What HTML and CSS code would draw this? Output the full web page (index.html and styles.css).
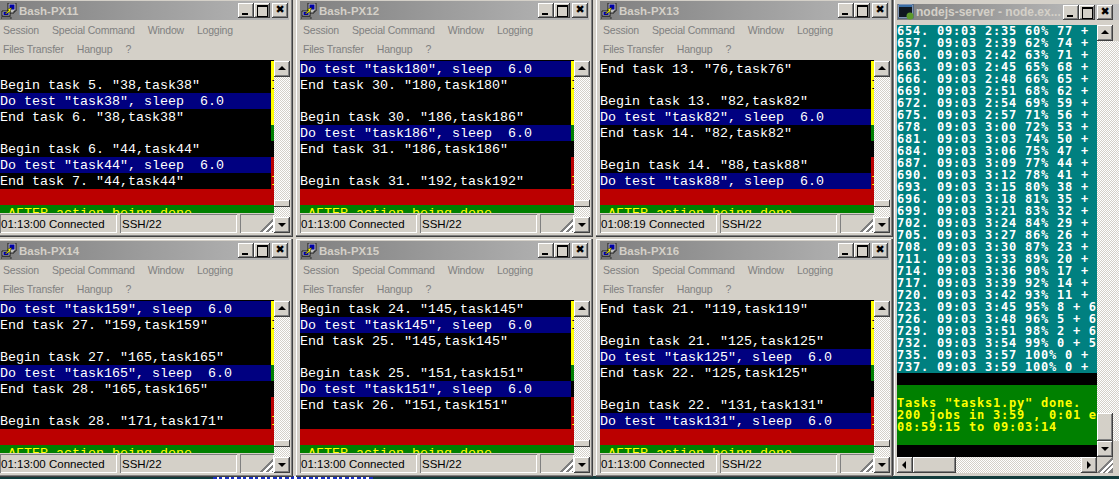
FILE: index.html
```html
<!DOCTYPE html>
<html lang="en">
<head>
<meta charset="utf-8">
<title>Bash-PX windows</title>
<link rel="stylesheet" href="styles.css">
</head>
<body>
<svg class="defs" width="0" height="0" aria-hidden="true">
  <symbol id="putty" viewBox="0 0 16 16">
    <path d="M7 0h8v8h-2v2H8V8H7z" fill="#c0c0c0" stroke="#000" stroke-width=".8"/>
    <rect x="8.5" y="1.5" width="5" height="5" fill="#0000a8"/>
    <path d="M1 8h8v5H1z" fill="#c0c0c0" stroke="#000" stroke-width=".8"/>
    <rect x="2.5" y="9" width="5" height="3" fill="#0000a8"/>
    <path d="M0 14h10v2H0z" fill="#a0a0a0" stroke="#000" stroke-width=".6"/>
    <path d="M4 10.5 7.5 8l-.5-2 4-1.500-2 3 1 .5-5 3z" fill="#ffff00" stroke="#000" stroke-width=".4"/>
  </symbol>
  <symbol id="cmd" viewBox="0 0 16 16">
    <rect x="0" y="0" width="15" height="14" fill="#d8d8e8" stroke="#29507f"/>
    <rect x="1" y="3" width="13" height="10" fill="#101820"/>
    <rect x="1" y="1" width="13" height="2" fill="#3a6ea5"/>
    <circle cx="12" cy="12" r="3.500" fill="#5c9a2a"/>
  </symbol>
</svg>
<main class="desk">
  <div class="under"><span class="under-text"></span></div>

  <section class="win pos11">
    <header class="title"><svg class="ticon"><use href="#putty"/></svg><span class="tname">Bash-PX11</span><span class="ctl min"></span><span class="ctl max"></span><span class="ctl close">✖</span></header>
    <nav class="menu"><span>Session</span><span>Special Command</span><span>Window</span><span>Logging</span></nav>
    <nav class="menu"><span>Files Transfer</span><span>Hangup</span><span>?</span></nav>
    <div class="body">
      <div class="left">
        <div class="term">
          <div class="row"><span class="cells"></span><span class="edge y"></span></div>
          <div class="row"><span class="cells">Begin task 5. "38,task38"</span><span class="edge y mark">I</span></div>
          <div class="row"><span class="cells b">Do test "task38", sleep  6.0</span><span class="edge y"></span></div>
          <div class="row"><span class="cells">End task 6. "38,task38"</span><span class="edge y"></span></div>
          <div class="row"><span class="cells"></span><span class="edge g"></span></div>
          <div class="row"><span class="cells">Begin task 6. "44,task44"</span><span class="edge"></span></div>
          <div class="row"><span class="cells b">Do test "task44", sleep  6.0</span><span class="edge r"></span></div>
          <div class="row"><span class="cells">End task 7. "44,task44"</span><span class="edge r ymark">I</span></div>
          <div class="band red"></div>
          <div class="band green"> AFTER action being done</div>
        </div>
        <footer class="status"><span class="p1">01:13:00 Connected</span><span class="p2">SSH/22</span><span class="p3"></span></footer>
      </div>
      <aside class="vbar"><span class="btn up"></span><span class="track"><span class="thumb"></span></span><span class="btn down"></span></aside>
    </div>
  </section>

  <section class="win pos12">
    <header class="title"><svg class="ticon"><use href="#putty"/></svg><span class="tname">Bash-PX12</span><span class="ctl min"></span><span class="ctl max"></span><span class="ctl close">✖</span></header>
    <nav class="menu"><span>Session</span><span>Special Command</span><span>Window</span><span>Logging</span></nav>
    <nav class="menu"><span>Files Transfer</span><span>Hangup</span><span>?</span></nav>
    <div class="body">
      <div class="left">
        <div class="term">
          <div class="row"><span class="cells b">Do test "task180", sleep  6.0</span><span class="edge y"></span></div>
          <div class="row"><span class="cells">End task 30. "180,task180"</span><span class="edge y mark">I</span></div>
          <div class="row"><span class="cells"></span><span class="edge y"></span></div>
          <div class="row"><span class="cells">Begin task 30. "186,task186"</span><span class="edge y"></span></div>
          <div class="row"><span class="cells b">Do test "task186", sleep  6.0</span><span class="edge g"></span></div>
          <div class="row"><span class="cells">End task 31. "186,task186"</span><span class="edge"></span></div>
          <div class="row"><span class="cells"></span><span class="edge r"></span></div>
          <div class="row"><span class="cells">Begin task 31. "192,task192"</span><span class="edge r ymark">I</span></div>
          <div class="band red"></div>
          <div class="band green"> AFTER action being done</div>
        </div>
        <footer class="status"><span class="p1">01:13:00 Connected</span><span class="p2">SSH/22</span><span class="p3"></span></footer>
      </div>
      <aside class="vbar"><span class="btn up"></span><span class="track"><span class="thumb"></span></span><span class="btn down"></span></aside>
    </div>
  </section>

  <section class="win pos13">
    <header class="title"><svg class="ticon"><use href="#putty"/></svg><span class="tname">Bash-PX13</span><span class="ctl min"></span><span class="ctl max"></span><span class="ctl close">✖</span></header>
    <nav class="menu"><span>Session</span><span>Special Command</span><span>Window</span><span>Logging</span></nav>
    <nav class="menu"><span>Files Transfer</span><span>Hangup</span><span>?</span></nav>
    <div class="body">
      <div class="left">
        <div class="term">
          <div class="row"><span class="cells">End task 13. "76,task76"</span><span class="edge y"></span></div>
          <div class="row"><span class="cells"></span><span class="edge y mark">I</span></div>
          <div class="row"><span class="cells">Begin task 13. "82,task82"</span><span class="edge y"></span></div>
          <div class="row"><span class="cells b">Do test "task82", sleep  6.0</span><span class="edge y"></span></div>
          <div class="row"><span class="cells">End task 14. "82,task82"</span><span class="edge g"></span></div>
          <div class="row"><span class="cells"></span><span class="edge"></span></div>
          <div class="row"><span class="cells">Begin task 14. "88,task88"</span><span class="edge r"></span></div>
          <div class="row"><span class="cells b">Do test "task88", sleep  6.0</span><span class="edge r ymark">I</span></div>
          <div class="band red"></div>
          <div class="band green"> AFTER action being done</div>
        </div>
        <footer class="status"><span class="p1">01:08:19 Connected</span><span class="p2">SSH/22</span><span class="p3"></span></footer>
      </div>
      <aside class="vbar"><span class="btn up"></span><span class="track"><span class="thumb"></span></span><span class="btn down"></span></aside>
    </div>
  </section>

  <section class="win pos14">
    <header class="title"><svg class="ticon"><use href="#putty"/></svg><span class="tname">Bash-PX14</span><span class="ctl min"></span><span class="ctl max"></span><span class="ctl close">✖</span></header>
    <nav class="menu"><span>Session</span><span>Special Command</span><span>Window</span><span>Logging</span></nav>
    <nav class="menu"><span>Files Transfer</span><span>Hangup</span><span>?</span></nav>
    <div class="body">
      <div class="left">
        <div class="term">
          <div class="row"><span class="cells b">Do test "task159", sleep  6.0</span><span class="edge y"></span></div>
          <div class="row"><span class="cells">End task 27. "159,task159"</span><span class="edge y mark">I</span></div>
          <div class="row"><span class="cells"></span><span class="edge y"></span></div>
          <div class="row"><span class="cells">Begin task 27. "165,task165"</span><span class="edge y"></span></div>
          <div class="row"><span class="cells b">Do test "task165", sleep  6.0</span><span class="edge g"></span></div>
          <div class="row"><span class="cells">End task 28. "165,task165"</span><span class="edge"></span></div>
          <div class="row"><span class="cells"></span><span class="edge r"></span></div>
          <div class="row"><span class="cells">Begin task 28. "171,task171"</span><span class="edge r ymark">I</span></div>
          <div class="band red"></div>
          <div class="band green"> AFTER action being done</div>
        </div>
        <footer class="status"><span class="p1">01:13:00 Connected</span><span class="p2">SSH/22</span><span class="p3"></span></footer>
      </div>
      <aside class="vbar"><span class="btn up"></span><span class="track"><span class="thumb"></span></span><span class="btn down"></span></aside>
    </div>
  </section>

  <section class="win pos15">
    <header class="title"><svg class="ticon"><use href="#putty"/></svg><span class="tname">Bash-PX15</span><span class="ctl min"></span><span class="ctl max"></span><span class="ctl close">✖</span></header>
    <nav class="menu"><span>Session</span><span>Special Command</span><span>Window</span><span>Logging</span></nav>
    <nav class="menu"><span>Files Transfer</span><span>Hangup</span><span>?</span></nav>
    <div class="body">
      <div class="left">
        <div class="term">
          <div class="row"><span class="cells">Begin task 24. "145,task145"</span><span class="edge y"></span></div>
          <div class="row"><span class="cells b">Do test "task145", sleep  6.0</span><span class="edge y mark">I</span></div>
          <div class="row"><span class="cells">End task 25. "145,task145"</span><span class="edge y"></span></div>
          <div class="row"><span class="cells"></span><span class="edge y"></span></div>
          <div class="row"><span class="cells">Begin task 25. "151,task151"</span><span class="edge g"></span></div>
          <div class="row"><span class="cells b">Do test "task151", sleep  6.0</span><span class="edge"></span></div>
          <div class="row"><span class="cells">End task 26. "151,task151"</span><span class="edge r"></span></div>
          <div class="row"><span class="cells"></span><span class="edge r ymark">I</span></div>
          <div class="band red"></div>
          <div class="band green"> AFTER action being done</div>
        </div>
        <footer class="status"><span class="p1">01:13:00 Connected</span><span class="p2">SSH/22</span><span class="p3"></span></footer>
      </div>
      <aside class="vbar"><span class="btn up"></span><span class="track"><span class="thumb"></span></span><span class="btn down"></span></aside>
    </div>
  </section>

  <section class="win pos16">
    <header class="title"><svg class="ticon"><use href="#putty"/></svg><span class="tname">Bash-PX16</span><span class="ctl min"></span><span class="ctl max"></span><span class="ctl close">✖</span></header>
    <nav class="menu"><span>Session</span><span>Special Command</span><span>Window</span><span>Logging</span></nav>
    <nav class="menu"><span>Files Transfer</span><span>Hangup</span><span>?</span></nav>
    <div class="body">
      <div class="left">
        <div class="term">
          <div class="row"><span class="cells">End task 21. "119,task119"</span><span class="edge y"></span></div>
          <div class="row"><span class="cells"></span><span class="edge y mark">I</span></div>
          <div class="row"><span class="cells">Begin task 21. "125,task125"</span><span class="edge y"></span></div>
          <div class="row"><span class="cells b">Do test "task125", sleep  6.0</span><span class="edge y"></span></div>
          <div class="row"><span class="cells">End task 22. "125,task125"</span><span class="edge g"></span></div>
          <div class="row"><span class="cells"></span><span class="edge"></span></div>
          <div class="row"><span class="cells">Begin task 22. "131,task131"</span><span class="edge r"></span></div>
          <div class="row"><span class="cells b">Do test "task131", sleep  6.0</span><span class="edge r ymark">I</span></div>
          <div class="band red"></div>
          <div class="band green"> AFTER action being done</div>
        </div>
        <footer class="status"><span class="p1">01:13:00 Connected</span><span class="p2">SSH/22</span><span class="p3"></span></footer>
      </div>
      <aside class="vbar"><span class="btn up"></span><span class="track"><span class="thumb"></span></span><span class="btn down"></span></aside>
    </div>
  </section>

  <section class="node">
    <header class="ntitle"><svg class="ticon"><use href="#cmd"/></svg><span class="nname">nodejs-server - node.ex...</span><span class="ctl min"></span><span class="ctl max"></span><span class="ctl close">✖</span></header>
    <div class="nbody">
      <div class="nleft">
        <div class="console">
<pre class="teal">654. 09:03 2:35 60% 77 +
657. 09:03 2:39 62% 74 +
660. 09:03 2:42 63% 71 +
663. 09:03 2:45 65% 68 +
666. 09:03 2:48 66% 65 +
669. 09:03 2:51 68% 62 +
672. 09:03 2:54 69% 59 +
675. 09:03 2:57 71% 56 +
678. 09:03 3:00 72% 53 +
681. 09:03 3:03 74% 50 +
684. 09:03 3:06 75% 47 +
687. 09:03 3:09 77% 44 +
690. 09:03 3:12 78% 41 +
693. 09:03 3:15 80% 38 +
696. 09:03 3:18 81% 35 +
699. 09:03 3:21 83% 32 +
702. 09:03 3:24 84% 29 +
705. 09:03 3:27 86% 26 +
708. 09:03 3:30 87% 23 +
711. 09:03 3:33 89% 20 +
714. 09:03 3:36 90% 17 +
717. 09:03 3:39 92% 14 +
720. 09:03 3:42 93% 11 +
723. 09:03 3:45 95% 8 + 6
726. 09:03 3:48 96% 5 + 6
729. 09:03 3:51 98% 2 + 6
732. 09:03 3:54 99% 0 + 5
735. 09:03 3:57 100% 0 +
737. 09:03 3:59 100% 0 +</pre>
<pre class="blk"> </pre>
<pre class="grn"> 
Tasks "tasks1.py" done.
200 jobs in 3:59 , 0:01 each
08:59:15 to 09:03:14
 </pre>
<pre class="blk"> </pre>
        </div>
        <div class="hbar"><span class="btn left-a"></span><span class="hthumb"></span><span class="htrack"></span><span class="btn right-a"></span></div>
      </div>
      <aside class="nvbar"><span class="btn up"></span><span class="ntrack"><span class="nthumb"></span></span><span class="btn down"></span><span class="grip"></span></aside>
    </div>
  </section>
</main>
</body>
</html>
```
FILE: styles.css
```css
* { box-sizing: border-box; }
html, body { margin: 0; padding: 0; }
body { width: 1119px; height: 479px; overflow: hidden; background: #d4d0c8; }
.defs { position: absolute; }
.desk { position: relative; width: 1119px; height: 479px; overflow: hidden; background: #d4d0c8; }

.under { position: absolute; left: 0; right: 0; top: 476px; height: 3px; background: #123c3c; overflow: hidden; }
.under-text { position: absolute; left: 213px; top: 0; width: 160px; height: 3px; background: repeating-linear-gradient(90deg, #1830c0 0 4px, #fff 4px 6px, #1830c0 6px 9px, #fff 9px 12px); }

.win {
  position: absolute; width: 297px; height: 238px; padding: 2px 3px 4px 4px;
  display: flex; flex-direction: column; background: #d4d0c8;
  border-right: 1px solid #404040; border-bottom: 1px solid #404040;
  box-shadow: inset -1px -1px #808080, inset 1px 1px #fff;
}
.pos11 { left: -4px; top: -1px; }
.pos12 { left: 296px; top: -1px; }
.pos13 { left: 596px; top: -1px; }
.pos14 { left: -4px; top: 239px; }
.pos15 { left: 296px; top: 239px; }
.pos16 { left: 596px; top: 239px; }

.title, .ntitle {
  display: flex; align-items: center; height: 19px; flex: none;
  background: linear-gradient(90deg, #808080, #b8b8b8);
  padding: 0 1px 0 1px;
}
.ticon { width: 16px; height: 16px; flex: none; }
.tname, .nname {
  flex: 1; margin-left: 2px; color: #d4d0c8; white-space: nowrap; overflow: hidden;
  font: bold 11.5px/16px "Liberation Sans", sans-serif;
}
.ctl {
  flex: none; width: 16px; height: 15px; position: relative;
  background: #d4d0c8; color: #000; text-align: center;
  font: bold 11px/14px "DejaVu Sans", sans-serif;
  box-shadow: inset -1px -1px #404040, inset 1px 1px #fff, inset -2px -2px #808080;
}
.ctl.close { margin-left: 2px; }
.ctl.min::before { content: ""; position: absolute; left: 4px; top: 10px; width: 6px; height: 2px; background: #000; }
.ctl.max::before { content: ""; position: absolute; left: 3px; top: 2px; width: 9px; height: 9px; border: 1px solid #000; border-top-width: 2px; }

.menu {
  display: flex; gap: 13px; height: 20px; flex: none; padding-left: 3px;
  color: #808080; font: 10.5px/20px "Liberation Sans", sans-serif; letter-spacing: -.2px;
}
.menu + .menu { line-height: 18px; }

.body { display: flex; height: 173px; flex: none; }
.left { display: flex; flex-direction: column; width: 274px; flex: none; }
.term {
  height: 153px; flex: none; overflow: hidden; background: #000; padding-top: 1px;
  color: #fff; font: 13.33px/18px "Liberation Mono", monospace;
}
.row { display: flex; height: 16px; }
.cells { display: block; width: 271px; flex: none; overflow: hidden; height: 16px; white-space: pre; }
.cells.b { background: #000080; }
.edge { display: block; width: 3px; flex: none; overflow: hidden; height: 16px; background: #000; }
.edge.y { background: #ffff00; }
.edge.g { background: #008000; }
.edge.r { background: #bb0000; }
.edge.mark { color: #000; }
.edge.ymark { color: #ffff00; }
.band { height: 16px; width: 274px; color: #ffff00; overflow: hidden; white-space: pre; }
.band.red { background: #bb0000; }
.band.green { background: #008000; }

.status {
  display: flex; height: 20px; flex: none; gap: 3px; padding-top: 1px;
  color: #000; font: 11.5px/20px "Liberation Sans", sans-serif; white-space: nowrap;
}
.status span { display: block; height: 19px; box-shadow: inset 1px 1px #808080, inset -1px -1px #fff; overflow: hidden; }
.p1 { width: 117px; padding-left: 1px; }
.p2 { width: 117px; padding-left: 2px; }
.p3 { width: 34px; background: linear-gradient(135deg, transparent 70%, #808080 70%, #808080 76%, #fff 76%, #fff 82%, #808080 82%, #808080 88%, #fff 88%, #fff 94%, #808080 94%); }

.vbar { display: flex; flex-direction: column; width: 16px; flex: none; padding-top: 1px; }
.btn {
  display: block; position: relative; width: 16px; height: 16px; flex: none; background: #d4d0c8;
  box-shadow: inset -1px -1px #404040, inset 1px 1px #fff, inset -2px -2px #808080;
}
.btn::before { content: ""; position: absolute; width: 0; height: 0; border-style: solid; border-color: transparent; }
.up::before { left: 4px; top: 5px; border-width: 0 4px 4px; border-bottom-color: #000; }
.down::before { left: 4px; top: 6px; border-width: 4px 4px 0; border-top-color: #000; }
.left-a::before { left: 5px; top: 4px; border-width: 4px 4px 4px 0; border-right-color: #000; }
.right-a::before { left: 6px; top: 4px; border-width: 4px 0 4px 4px; border-left-color: #000; }
.track, .ntrack, .htrack {
  background: repeating-conic-gradient(#d4d0c8 0 25%, #fff 0 50%) 0 0 / 2px 2px;
}
.track { display: flex; flex-direction: column; justify-content: flex-end; flex: 1; padding-bottom: 10px; }
.thumb {
  display: block; height: 7px; background: #d4d0c8;
  box-shadow: inset -1px -1px #404040, inset 1px 1px #fff;
}

.node {
  position: absolute; left: 893px; top: 0; width: 226px; height: 475px; padding: 4px 0 0 4px;
  display: flex; flex-direction: column; background: #d4d0c8; box-shadow: inset 1px 0 #808080, inset 2px 0 #fff;
}
.ntitle { height: 16px; padding: 0 6px 0 1px; background: linear-gradient(90deg, #808080, #c4c4c4); }
.nname { margin-left: 2px; font-size: 12px; }
.nbody { display: flex; margin-top: 5px; }
.nleft { display: flex; flex-direction: column; width: 200px; flex: none; }
.console { height: 432px; overflow: hidden; width: 200px; background: #000; }
.console pre {
  margin: 0; font: bold 12px/12px "DejaVu Sans Mono", monospace; letter-spacing: .77px; white-space: pre; overflow: hidden;
}
.teal { background: #008080; color: #fff; }
.blk { background: #000; height: 12px; }
.grn { background: #008000; color: #ffff00; height: 60px; }
.hbar { display: flex; height: 16px; }
.hthumb { width: 43px; flex: none; background: #d4d0c8; box-shadow: inset -1px -1px #404040, inset 1px 1px #fff, inset -2px -2px #808080; }
.htrack { flex: 1; }
.nvbar { display: flex; flex-direction: column; width: 22px; flex: none; }
.ntrack { display: flex; flex-direction: column; justify-content: flex-end; height: 400px; flex: none; }
.nthumb { width: 16px; height: 28px; background: #d4d0c8; box-shadow: inset -1px -1px #404040, inset 1px 1px #fff, inset -2px -2px #808080; flex: none; }
.grip { width: 16px; height: 16px; flex: none; background: linear-gradient(135deg, transparent 50%, #808080 50%, #808080 58%, #fff 58%, #fff 66%, #808080 66%, #808080 74%, #fff 74%, #fff 82%, #808080 82%); }
```
